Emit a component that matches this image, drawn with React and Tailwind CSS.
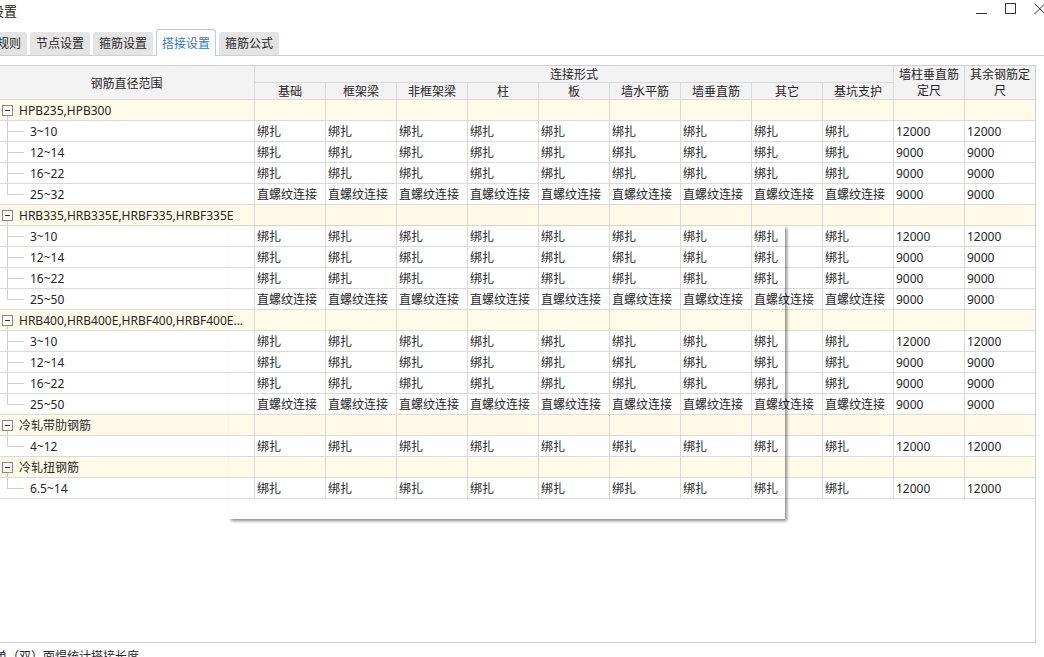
import React from 'react';

const B = '绑扎';
const S = '直螺纹连接';

const groups = [
  {
    name: 'HPB235,HPB300',
    rows: [
      ['3~10', B, '12000', '12000'],
      ['12~14', B, '9000', '9000'],
      ['16~22', B, '9000', '9000'],
      ['25~32', S, '9000', '9000'],
    ],
  },
  {
    name: 'HRB335,HRB335E,HRBF335,HRBF335E',
    rows: [
      ['3~10', B, '12000', '12000'],
      ['12~14', B, '9000', '9000'],
      ['16~22', B, '9000', '9000'],
      ['25~50', S, '9000', '9000'],
    ],
  },
  {
    name: 'HRB400,HRB400E,HRBF400,HRBF400E...',
    rows: [
      ['3~10', B, '12000', '12000'],
      ['12~14', B, '9000', '9000'],
      ['16~22', B, '9000', '9000'],
      ['25~50', S, '9000', '9000'],
    ],
  },
  { name: '冷轧带肋钢筋', rows: [['4~12', B, '12000', '12000']] },
  { name: '冷轧扭钢筋', rows: [['6.5~14', B, '12000', '12000']] },
];

const subHeaders = ['基础', '框架梁', '非框架梁', '柱', '板', '墙水平筋', '墙垂直筋', '其它', '基坑支护'];

function cellCls(i, group) {
  const base = 'h-[21px] pt-[2px] border-b border-[#dadada] flex items-center overflow-hidden whitespace-nowrap';
  const r = i < 11 ? ' border-r' : '';
  const bg = group ? ' bg-[#fffbe8]' : ' bg-white';
  return base + r + bg;
}

function GroupRow({ name }) {
  const cells = [];
  cells.push(
    <div key="c0" className={cellCls(0, true) + ' relative pl-[20px]'}>
      <div className="absolute left-[3px] top-[5px] w-[11px] h-[11px] border border-[#8a8a8a] bg-white flex items-center justify-center">
        <div className="w-[5px] h-px bg-[#333]" />
      </div>
      <div className="absolute left-[8px] top-[16px] w-px h-[5px] bg-[#cfcfcf]" />
      <span>{name}</span>
    </div>
  );
  for (let i = 1; i < 12; i++) cells.push(<div key={i} className={cellCls(i, true)} />);
  return <>{cells}</>;
}

function ChildRow({ row, last }) {
  const [label, t, a, b] = row;
  const cells = [];
  cells.push(
    <div key="c0" className={cellCls(0, false) + ' relative pl-[31px]'}>
      {last ? (
        <div className="absolute left-[8px] top-0 w-px h-[10px] bg-[#cfcfcf]" />
      ) : (
        <div className="absolute left-[8px] top-0 w-px h-[21px] bg-[#cfcfcf]" />
      )}
      <div className="absolute left-[8px] top-[10px] w-[17px] h-px bg-[#cfcfcf]" />
      <span>{label}</span>
    </div>
  );
  for (let i = 1; i <= 9; i++)
    cells.push(
      <div key={i} className={cellCls(i, false) + ' pl-[2px]'}>
        {t}
      </div>
    );
  cells.push(
    <div key="a" className={cellCls(10, false) + ' pl-[2px]'}>
      {a}
    </div>
  );
  cells.push(
    <div key="b" className={cellCls(11, false) + ' pl-[2px]'}>
      {b}
    </div>
  );
  return <>{cells}</>;
}

export default function App() {
  return (
    <div className="relative w-[1044px] h-[657px] overflow-hidden bg-white text-[12px] text-[#262626] font-[Noto_Sans,Noto_Sans_CJK_SC,sans-serif]">
      {/* title bar */}
      <div className="h-[29px] flex items-start justify-between">
        <div className="ml-[-35px] mt-[2px] text-[13px] text-[#222] leading-[18px]">计算设置</div>
        <div className="flex items-start h-full pt-[3px]">
          <svg width="12" height="12" viewBox="0 0 12 12" className="mr-[17px]">
            <line x1="0" y1="10.5" x2="11" y2="10.5" stroke="#333" strokeWidth="1" />
          </svg>
          <svg width="12" height="12" viewBox="0 0 12 12" className="mr-[17px]">
            <rect x="0.5" y="0.5" width="10" height="10" fill="none" stroke="#333" strokeWidth="1" />
          </svg>
          <svg width="10" height="12" viewBox="0 0 10 12">
            <line x1="0.5" y1="0.5" x2="11" y2="11" stroke="#333" strokeWidth="1" />
            <line x1="0.5" y1="11" x2="11" y2="0.5" stroke="#333" strokeWidth="1" />
          </svg>
        </div>
      </div>

      {/* tabs */}
      <div className="h-[27px] flex items-end gap-[3px] border-b border-[#cfcfcf]">
        <div className="ml-[-33px] w-[60px] h-[23px] pt-[1px] rounded-t-[3px] bg-[#e4e4e4] flex items-center justify-center">计算规则</div>
        <div className="w-[60px] h-[23px] pt-[1px] rounded-t-[3px] bg-[#e4e4e4] flex items-center justify-center">节点设置</div>
        <div className="w-[60px] h-[23px] pt-[1px] rounded-t-[3px] bg-[#e4e4e4] flex items-center justify-center">箍筋设置</div>
        <div className="w-[60px] h-[27px] mb-[-1px] pt-[1px] rounded-t-[3px] bg-white border border-b-0 border-[#c9c9c9] flex items-center justify-center text-[#2f7bd0]">搭接设置</div>
        <div className="w-[60px] h-[23px] pt-[1px] rounded-t-[3px] bg-[#e4e4e4] flex items-center justify-center">箍筋公式</div>
      </div>

      {/* table */}
      <div className="mt-[9px] ml-[-1px] w-[1037px] h-[578px] border-t border-r border-b border-[#cfcfcf]">
        <div className="grid grid-cols-[256px_repeat(10,71px)_70px] grid-rows-[17px_17px] bg-[#f3f3f3] leading-[16px]">
          <div className="row-span-2 pt-[2px] border-r border-b border-[#dadada] flex items-center justify-center">钢筋直径范围</div>
          <div className="col-span-9 pt-[1px] border-r border-b border-[#dadada] flex items-center justify-center">连接形式</div>
          <div className="row-span-2 pt-[1px] border-r border-b border-[#dadada] flex items-center justify-center text-center">
            墙柱垂直筋
            <br />
            定尺
          </div>
          <div className="row-span-2 pt-[1px] border-b border-[#dadada] flex items-center justify-center text-center">
            其余钢筋定
            <br />
            尺
          </div>
          {subHeaders.map((h) => (
            <div key={h} className="pt-[1px] border-r border-b border-[#dadada] flex items-center justify-center">
              {h}
            </div>
          ))}
        </div>
        <div className="grid grid-cols-[256px_repeat(10,71px)_70px] leading-[20px]">
          {groups.map((g) => (
            <React.Fragment key={g.name}>
              <GroupRow name={g.name} />
              {g.rows.map((r, idx) => (
                <ChildRow key={idx} row={r} last={idx === g.rows.length - 1} />
              ))}
            </React.Fragment>
          ))}
        </div>
      </div>

      <div className="mt-[6px] ml-[-5px] leading-[16px] whitespace-nowrap">单（双）面焊统计搭接长度</div>

      {/* ghost popup shadow */}
      <div className="absolute left-[229px] top-[226px] w-[556px] h-[293px] shadow-[2px_2px_3px_rgba(0,0,0,0.45)] pointer-events-none" />
    </div>
  );
}
